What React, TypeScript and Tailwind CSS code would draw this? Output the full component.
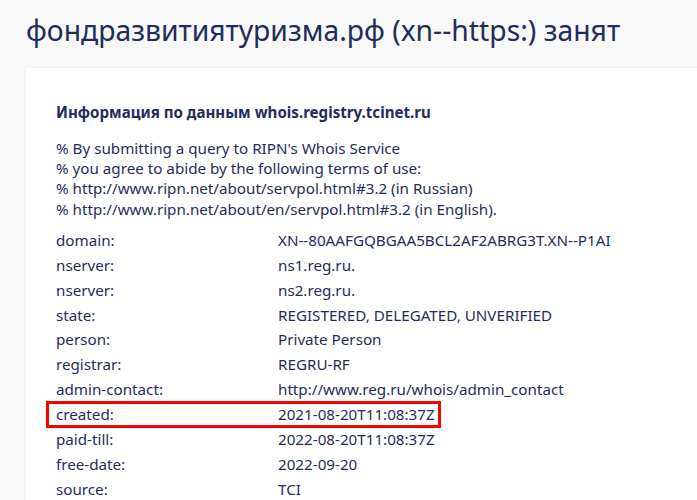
export default function App() {
  const rows: [string, string][] = [
    ["domain:", "XN--80AAFGQBGAA5BCL2AF2ABRG3T.XN--P1AI"],
    ["nserver:", "ns1.reg.ru."],
    ["nserver:", "ns2.reg.ru."],
    ["state:", "REGISTERED, DELEGATED, UNVERIFIED"],
    ["person:", "Private Person"],
    ["registrar:", "REGRU-RF"],
    ["admin-contact:", "http://www.reg.ru/whois/admin_contact"],
    ["created:", "2021-08-20T11:08:37Z"],
    ["paid-till:", "2022-08-20T11:08:37Z"],
    ["free-date:", "2022-09-20"],
    ["source:", "TCI"],
  ];
  return (
    <div
      className="w-[697px] h-[500px] overflow-hidden bg-[#f8f8f8] text-[#1f2d5c]"
      style={{ fontFamily: '"Noto Sans", "Open Sans", sans-serif' }}
    >
      <h1 className="pl-[26px] pt-[10px] text-[28.3px] leading-[40px] font-normal whitespace-nowrap">
        фондразвитиятуризма.рф (xn--https:) занят
      </h1>
      <div className="ml-[26px] mt-[18px] w-[700px] bg-white shadow-[0_0_4px_rgba(0,0,0,0.06)] pl-[30px] pt-[34px] pb-10">
        <h2 className="text-[15.1px] leading-[20px] font-bold">
          Информация по данным whois.registry.tcinet.ru
        </h2>
        <div className="mt-[16px] text-[15.2px] leading-[20.2px]">
          <div>% By submitting a query to RIPN's Whois Service</div>
          <div>% you agree to abide by the following terms of use:</div>
          <div>% http://www.ripn.net/about/servpol.html#3.2 (in Russian)</div>
          <div>% http://www.ripn.net/about/en/servpol.html#3.2 (in English).</div>
        </div>
        <div className="mt-[9px] text-[15.2px]">
          {rows.map(([k, v], i) => (
            <div
              key={i}
              className={
                k === "created:"
                  ? "relative flex h-[24.9px] items-center"
                  : "flex h-[24.9px] items-center"
              }
            >
              <span className="w-[222px] shrink-0">{k}</span>
              <span>{v}</span>
              {k === "created:" && (
                <span className="absolute left-[-10px] top-[-1px] w-[395px] h-[27px] border-[3px] border-[#ff0000]" />
              )}
            </div>
          ))}
        </div>
      </div>
    </div>
  );
}
